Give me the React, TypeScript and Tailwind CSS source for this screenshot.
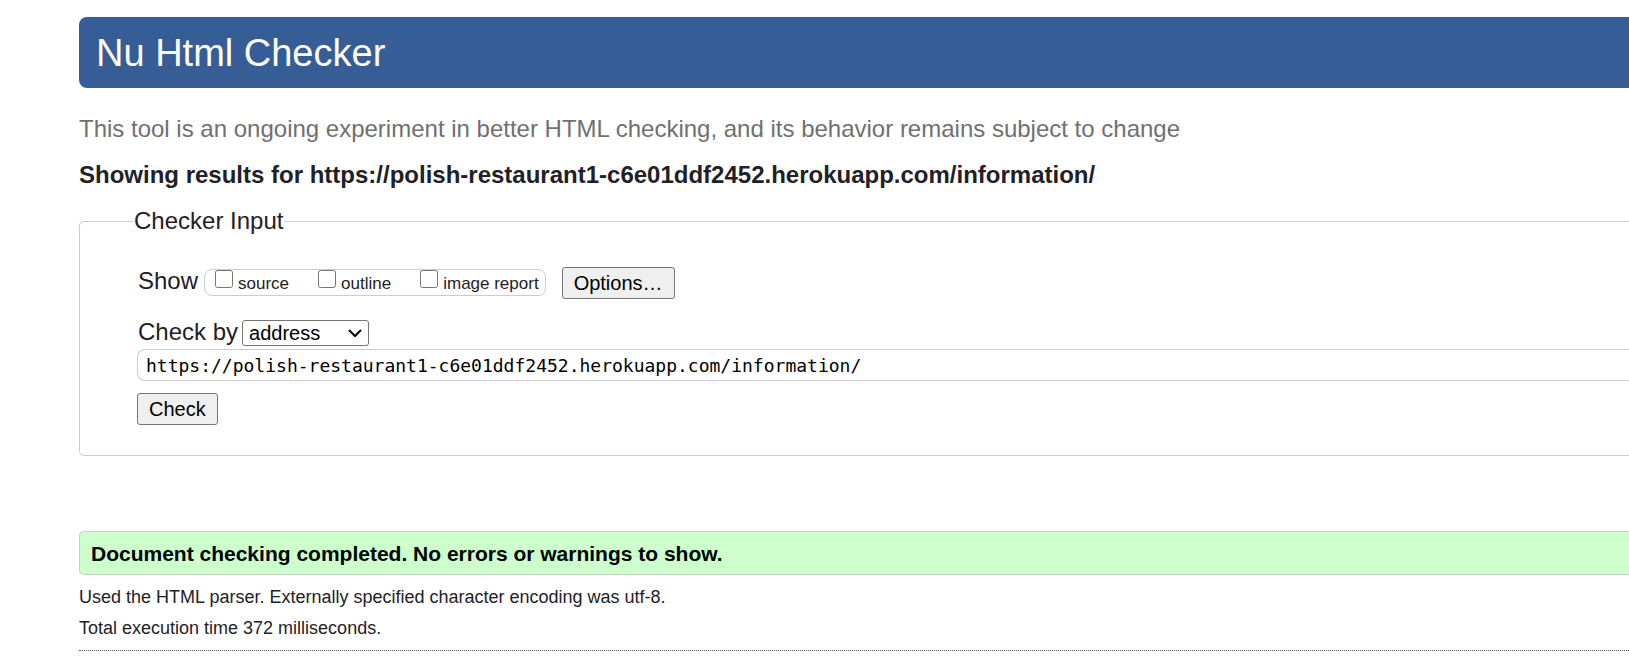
import { useState } from "react";

const reports = ["source", "outline", "image report"];

const buttonClass =
  "h-8 rounded-[3px] border border-[#767676] bg-[#efefef] px-[11px] text-xl leading-[30px] text-black";

export default function App() {
  const [address, setAddress] = useState(
    "https://polish-restaurant1-c6e01ddf2452.herokuapp.com/information/",
  );

  return (
    <div className="overflow-hidden bg-white pt-[17px] pl-[79px] font-['Liberation_Sans',Arial,sans-serif] text-[#1f2126]">
      <header className="rounded-l-lg bg-[#365d95] px-[17px] pt-[13px] pb-[11px]">
        <h1 className="text-[38px] leading-[47px] text-white">Nu Html Checker</h1>
      </header>

      <main>
        <p className="mt-[27px] text-2xl leading-7 text-[#707070]">
          This tool is an ongoing experiment in better HTML checking, and its behavior remains
          subject to change
        </p>
        <h2 className="mt-[18px] text-2xl leading-7 font-bold">
          Showing results for https://polish-restaurant1-c6e01ddf2452.herokuapp.com/information/
        </h2>

        <form onSubmit={(event) => event.preventDefault()}>
          <fieldset className="mt-[18px] rounded-l-[5px] border border-r-0 border-[#ccc] pb-[30px] pl-[57px]">
            <legend className="-ml-1 px-px text-2xl leading-7">Checker Input</legend>

            <div className="mt-8 flex items-start pl-px">
              <span className="text-2xl leading-7">Show</span>
              <div className="mt-[2px] ml-1.5 flex h-[27px] items-start gap-[29px] rounded-lg border border-[#ccc] pr-1.5 pl-[10px]">
                {reports.map((report) => (
                  <label key={report} className="flex items-start gap-[5px] text-[17px] leading-[27px]">
                    <input type="checkbox" className="size-[18px]" />
                    {report}
                  </label>
                ))}
              </div>
              <button type="button" className={`${buttonClass} ml-4`}>
                Options…
              </button>
            </div>

            <div className="mt-[21px] flex items-start gap-1 pl-px">
              <label htmlFor="method" className="text-2xl leading-6">
                Check by
              </label>
              <div className="relative">
                <select
                  id="method"
                  className="block h-[26px] w-[127px] appearance-none rounded-[3px] border border-[#767676] bg-white pl-1.5 text-xl leading-6 text-black"
                >
                  <option>address</option>
                  <option>file upload</option>
                  <option>text input</option>
                </select>
                <svg
                  viewBox="0 0 14 9"
                  className="pointer-events-none absolute top-[9px] right-[7px] h-[9px] w-[14px] fill-none stroke-black stroke-2"
                  aria-hidden="true"
                >
                  <path d="M1 1 L7 7 L13 1" />
                </svg>
              </div>
            </div>

            <input
              type="url"
              aria-label="Address of page to check"
              value={address}
              onChange={(event) => setAddress(event.target.value)}
              className="mt-[3px] block h-8 w-full rounded-l-lg border border-r-0 border-[#ccc] bg-white px-2 font-['DejaVu_Sans_Mono',monospace] text-lg leading-6 text-black"
            />
            <button type="submit" className={`${buttonClass} mt-3 block`}>
              Check
            </button>
          </fieldset>
        </form>

        <p className="mt-[75px] rounded-l-[5px] border border-r-0 border-[#ccc] bg-[#cfc] px-[11px] pt-[10px] pb-2 text-[21px] leading-6 font-bold text-black">
          Document checking completed. No errors or warnings to show.
        </p>
        <p className="mt-[10px] text-lg leading-6">
          Used the HTML parser. Externally specified character encoding was utf-8.
        </p>
        <p className="mt-[7px] text-lg leading-6">Total execution time 372 milliseconds.</p>
        <hr className="mt-[10px] border-t border-dotted border-[#555]" />
      </main>
    </div>
  );
}
